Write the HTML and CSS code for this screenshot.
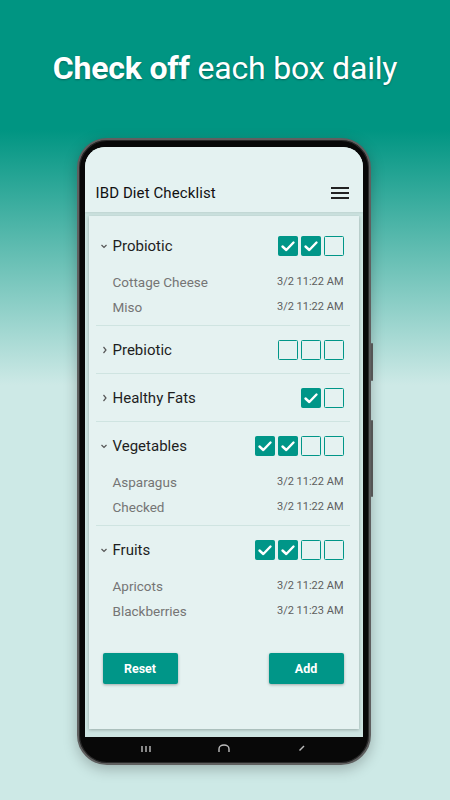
FILE: index.html
```html
<!DOCTYPE html>
<html lang="en">
<head>
<meta charset="utf-8">
<title>IBD Diet Checklist</title>
<link rel="stylesheet" href="styles.css">
</head>
<body>
<div class="page">
  <h1 class="headline"><b>Check off</b> each box daily</h1>
  <div class="phone">
    <span class="side-btn side-btn-1"></span>
    <span class="side-btn side-btn-2"></span>
    <div class="screen">
      <div class="appbar">
        <span class="app-title">IBD Diet Checklist</span>
        <span class="menu"><i></i><i></i><i></i></span>
      </div>
      <div class="screen-body">
        <div class="card">
          <div class="group">
            <div class="group-head">
              <svg class="chev" viewBox="0 0 17 10"><path d="M5.5 4 L8 6.5 L10.5 4"/></svg>
              <span class="group-name">Probiotic</span>
              <div class="boxes">
                <span class="box on"><svg viewBox="0 0 20 20"><path d="M4.5 10.5 L8.3 14 L15.5 6.5"/></svg></span>
                <span class="box on"><svg viewBox="0 0 20 20"><path d="M4.5 10.5 L8.3 14 L15.5 6.5"/></svg></span>
                <span class="box"></span>
              </div>
            </div>
            <div class="item"><span>Cottage Cheese</span><span class="time">3/2 11:22 AM</span></div>
            <div class="item"><span>Miso</span><span class="time">3/2 11:22 AM</span></div>
          </div>
          <div class="group collapsed">
            <div class="group-head">
              <svg class="chev" viewBox="0 0 17 10"><path d="M7.5 2 L10 5 L7.5 8"/></svg>
              <span class="group-name">Prebiotic</span>
              <div class="boxes">
                <span class="box"></span>
                <span class="box"></span>
                <span class="box"></span>
              </div>
            </div>
          </div>
          <div class="group collapsed">
            <div class="group-head">
              <svg class="chev" viewBox="0 0 17 10"><path d="M7.5 2 L10 5 L7.5 8"/></svg>
              <span class="group-name">Healthy Fats</span>
              <div class="boxes">
                <span class="box on"><svg viewBox="0 0 20 20"><path d="M4.5 10.5 L8.3 14 L15.5 6.5"/></svg></span>
                <span class="box"></span>
              </div>
            </div>
          </div>
          <div class="group">
            <div class="group-head">
              <svg class="chev" viewBox="0 0 17 10"><path d="M5.5 4 L8 6.5 L10.5 4"/></svg>
              <span class="group-name">Vegetables</span>
              <div class="boxes">
                <span class="box on"><svg viewBox="0 0 20 20"><path d="M4.5 10.5 L8.3 14 L15.5 6.5"/></svg></span>
                <span class="box on"><svg viewBox="0 0 20 20"><path d="M4.5 10.5 L8.3 14 L15.5 6.5"/></svg></span>
                <span class="box"></span>
                <span class="box"></span>
              </div>
            </div>
            <div class="item"><span>Asparagus</span><span class="time">3/2 11:22 AM</span></div>
            <div class="item"><span>Checked</span><span class="time">3/2 11:22 AM</span></div>
          </div>
          <div class="group last">
            <div class="group-head">
              <svg class="chev" viewBox="0 0 17 10"><path d="M5.5 4 L8 6.5 L10.5 4"/></svg>
              <span class="group-name">Fruits</span>
              <div class="boxes">
                <span class="box on"><svg viewBox="0 0 20 20"><path d="M4.5 10.5 L8.3 14 L15.5 6.5"/></svg></span>
                <span class="box on"><svg viewBox="0 0 20 20"><path d="M4.5 10.5 L8.3 14 L15.5 6.5"/></svg></span>
                <span class="box"></span>
                <span class="box"></span>
              </div>
            </div>
            <div class="item"><span>Apricots</span><span class="time">3/2 11:22 AM</span></div>
            <div class="item"><span>Blackberries</span><span class="time">3/2 11:23 AM</span></div>
          </div>
          <div class="actions">
            <button class="btn">Reset</button>
            <button class="btn">Add</button>
          </div>
        </div>
      </div>
    </div>
    <div class="navbar">
      <svg class="nav-icon" viewBox="0 0 12 8"><path d="M2 2 V8 M6 2 V8 M10 2 V8"/></svg>
      <svg class="nav-icon" viewBox="0 0 12 8"><path d="M1 8 V5 A5 4 0 0 1 11 5 V8"/></svg>
      <svg class="nav-icon" viewBox="0 0 12 8"><path d="M8 2 L3.5 6.5"/></svg>
    </div>
  </div>
</div>
</body>
</html>
```

FILE: styles.css
```css
* { box-sizing: border-box; }
html, body { margin: 0; padding: 0; }
body {
  font-family: Roboto, "Noto Sans", Arial, sans-serif;
}
.page {
  width: 450px;
  height: 800px;
  overflow: hidden;
  background: linear-gradient(180deg, #009582 0px, #009582 130px, #cde9e6 385px, #cde9e6 800px);
  display: flex;
  flex-direction: column;
  align-items: center;
}
.headline {
  margin: 0;
  padding-top: 49px;
  font-size: 32px;
  line-height: 38px;
  font-weight: 400;
  color: #fff;
  text-shadow: 0 1px 2px rgba(0,0,0,0.3);
  letter-spacing: -0.2px;
}
.headline b { font-weight: 700; }

.phone {
  position: relative;
  margin-top: 51px;
  margin-left: -3px;
  width: 294px;
  height: 627px;
  background: #080808;
  border: 2px solid #5f5f5f;
  border-radius: 30px;
  padding: 7px 6px 0 6px;
  box-shadow: 0 4px 14px rgba(0,0,0,0.25), inset 0 0 0 1px #2a2a2a;
  display: flex;
  flex-direction: column;
}
.side-btn {
  position: absolute;
  right: -4px;
  width: 2px;
  background: #555;
  border-radius: 1px;
}
.side-btn-1 { top: 203px; height: 38px; }
.side-btn-2 { top: 280px; height: 77px; }

.screen {
  height: 590px;
  border-radius: 20px 20px 0 0;
  overflow: hidden;
  background: #cde4e1;
  display: flex;
  flex-direction: column;
}
.appbar {
  height: 65px;
  background: #e4f2f1;
  display: flex;
  align-items: flex-end;
  justify-content: space-between;
  padding: 0 14px 9px 11px;
  box-shadow: 0 1px 2px rgba(0,0,0,0.08);
}
.app-title {
  font-size: 15px;
  line-height: 20px;
  font-weight: 400;
  color: #111;
  letter-spacing: 0.1px;
}
.menu {
  display: flex;
  flex-direction: column;
  gap: 3px;
  width: 18px;
  margin-bottom: 4px;
}
.menu i {
  display: block;
  height: 2px;
  background: #222;
}
.screen-body {
  flex: 1;
  padding: 4px 4px 8px 4px;
  display: flex;
}
.card {
  flex: 1;
  background: #e5f2f1;
  box-shadow: 0 1px 3px rgba(0,0,0,0.25);
  padding: 6px 9px 0 7px;
}
.group {
  padding-bottom: 6px;
  border-bottom: 1px solid #cfe4e1;
}
.group.collapsed { padding-bottom: 0; }
.group.last { border-bottom: none; }
.group-head {
  height: 47px;
  display: flex;
  align-items: center;
  padding-right: 6px;
}
.chev {
  width: 17px;
  height: 10px;
  fill: none;
  stroke: #555;
  stroke-width: 1.2;
  flex: none;
}
.group-name {
  flex: 1;
  font-size: 15px;
  color: #1e1e1e;
}
.boxes {
  display: flex;
  gap: 3px;
}
.box {
  width: 20px;
  height: 20px;
  border: 1.5px solid #009688;
  border-radius: 1.5px;
  display: flex;
  align-items: center;
  justify-content: center;
}
.box.on {
  background: #009688;
  border-color: #009688;
}
.box svg {
  width: 20px;
  height: 20px;
  flex: none;
  fill: none;
  stroke: #fff;
  stroke-width: 2.4;
  stroke-linecap: round;
  stroke-linejoin: round;
}
.item {
  height: 25px;
  display: flex;
  align-items: center;
  justify-content: space-between;
  padding: 0 6px 0 17px;
  font-size: 13.5px;
  color: #757575;
}
.item .time {
  font-size: 11px;
  color: #5e5e5e;
}
.actions {
  display: flex;
  justify-content: space-between;
  padding: 0 6px 0 7px;
  margin-top: 24px;
}
.btn {
  width: 75px;
  height: 31px;
  border: none;
  border-radius: 2px;
  background: #009688;
  color: #fff;
  font-family: Roboto, "Noto Sans", Arial, sans-serif;
  font-size: 12.5px;
  font-weight: 700;
  box-shadow: 0 1px 3px rgba(0,0,0,0.3);
  padding: 0;
}
.navbar {
  height: 26px;
  display: grid;
  grid-template-columns: repeat(3, 1fr);
  justify-items: center;
  align-items: start;
  padding: 7px 22px 0 23px;
}
.nav-icon {
  width: 12px;
  height: 8px;
  fill: none;
  stroke: #bdbdbd;
  stroke-width: 1.4;
}
```
